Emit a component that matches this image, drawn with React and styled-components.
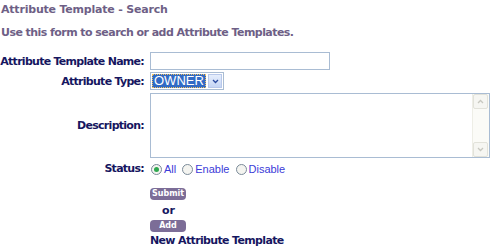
import React from "react";
import styled, { createGlobalStyle } from "styled-components";

const Global = createGlobalStyle`
  html, body { margin: 0; padding: 0; background: #ffffff; }
  body { font-family: "DejaVu Sans", Verdana, sans-serif; }
`;

const Page = styled.div`
  width: 493px;
  height: 247px;
  overflow: hidden;
  position: relative;
`;

const Title = styled.div`
  font-size: 11px;
  font-weight: bold;
  color: #6e5f86;
  padding: 3px 0 0 1px;
  height: 15px;
  line-height: 13px;
  letter-spacing: -0.2px;
  white-space: nowrap;
`;

const Intro = styled.div`
  font-size: 11px;
  font-weight: bold;
  color: #6e5f86;
  padding: 8px 0 0 1px;
  line-height: 13px;
  letter-spacing: -0.55px;
  white-space: nowrap;
`;

const Form = styled.div`
  display: grid;
  grid-template-columns: 150px 1fr;
  margin-top: 13px;
  row-gap: 2px;
`;

const Label = styled.div`
  font-size: 11px;
  font-weight: bold;
  color: #161660;
  padding-right: 6px;
  display: flex;
  align-items: center;
  justify-content: flex-end;
  letter-spacing: -0.72px;
  white-space: nowrap;
`;

const Field = styled.div`
  display: flex;
  align-items: center;
`;

const TextInput = styled.div`
  width: 178px;
  height: 16px;
  border: 1px solid #a9bcd3;
  background: #fff;
`;

const Select = styled.div`
  width: 70px;
  height: 14px;
  border: 1px solid #a9bcd3;
  display: flex;
  align-items: center;
  padding: 1px;
  box-sizing: content-box;
  margin-bottom: 1px;
`;

const SelectValue = styled.div`
  flex: 1;
  height: 14px;
  background: #316ac5;
  color: #fff;
  font-family: "Liberation Sans", Arial, sans-serif;
  font-size: 13px;
  line-height: 14px;
  padding-left: 2px;
  outline: 1px dotted #f0c060;
  outline-offset: -1px;
`;

const SelectArrow = styled.div`
  width: 14px;
  height: 14px;
  margin-left: 2px;
  background: linear-gradient(#e6eefc, #c5d5f5);
  border: 1px solid #b8c8ea;
  box-sizing: border-box;
  display: flex;
  align-items: center;
  justify-content: center;
`;

const TextArea = styled.div`
  width: 338px;
  height: 63px;
  border: 1px solid #a9bcd3;
  background: #fff;
  display: flex;
  justify-content: flex-end;
`;

const ScrollBar = styled.div`
  width: 16px;
  background: #fbfbf7;
  border-left: 1px solid #eeeee6;
  display: flex;
  flex-direction: column;
  justify-content: space-between;
`;

const ScrollBtn = styled.div`
  width: 15px;
  height: 15px;
  background: #f6f6f2;
  border: 1px solid #e2e2da;
  box-sizing: border-box;
  border-radius: 2px;
  display: flex;
  align-items: center;
  justify-content: center;
`;

const Radios = styled.div`
  display: flex;
  align-items: center;
  height: 16px;
  margin-top: 1px;
  font-family: "Liberation Sans", Arial, sans-serif;
  font-size: 11px;
  color: #3b3bd8;
`;

const RadioItem = styled.label`
  display: flex;
  align-items: center;
  margin-right: 5px;
`;

const Circle = styled.span`
  width: 9px;
  height: 9px;
  border: 1px solid #7a8a99;
  border-radius: 50%;
  background: #f4f4f0;
  margin: 0 2px 0 1px;
  display: flex;
  align-items: center;
  justify-content: center;
`;

const Dot = styled.span`
  width: 5px;
  height: 5px;
  border-radius: 50%;
  background: #2fa84f;
`;

const Actions = styled.div`
  grid-column: 2;
  display: flex;
  flex-direction: column;
  align-items: flex-start;
  padding-top: 9px;
`;

const Button = styled.div`
  width: ${(p) => p.w}px;
  height: 12px;
  border-radius: 4px;
  background: #7c6d97;
  color: #fff;
  font-size: 8px;
  font-weight: bold;
  line-height: 12px;
  text-align: center;
`;

const Or = styled.div`
  font-size: 11px;
  font-weight: bold;
  color: #161660;
  padding-left: 12px;
  line-height: 12px;
  margin: 5px 0 3px;
`;

const NewLink = styled.div`
  font-size: 11px;
  font-weight: bold;
  color: #161660;
  line-height: 13px;
  margin-top: 2px;
  letter-spacing: -0.65px;
  white-space: nowrap;
`;

function Chevron({ up, color = "#2a4aa0" }) {
  return (
    <svg width="7" height="5" viewBox="0 0 7 5">
      <path d={up ? "M1 4 L3.5 1.5 L6 4" : "M1 1 L3.5 3.5 L6 1"} fill="none" stroke={color} strokeWidth="1.3" />
    </svg>
  );
}

export default function App() {
  return (
    <Page>
      <Global />
      <Title>Attribute Template - Search</Title>
      <Intro>Use this form to search or add Attribute Templates.</Intro>
      <Form>
        <Label>Attribute Template Name:</Label>
        <Field><TextInput /></Field>

        <Label>Attribute Type:</Label>
        <Field>
          <Select>
            <SelectValue>OWNER</SelectValue>
            <SelectArrow><Chevron /></SelectArrow>
          </Select>
        </Field>

        <Label>Description:</Label>
        <Field>
          <TextArea>
            <ScrollBar>
              <ScrollBtn><Chevron up color="#c8c8c0" /></ScrollBtn>
              <ScrollBtn><Chevron color="#c8c8c0" /></ScrollBtn>
            </ScrollBar>
          </TextArea>
        </Field>

        <Label>Status:</Label>
        <Field>
          <Radios>
            <RadioItem><Circle><Dot /></Circle>All</RadioItem>
            <RadioItem><Circle />Enable</RadioItem>
            <RadioItem><Circle />Disable</RadioItem>
          </Radios>
        </Field>

        <Actions>
          <Button w={36}>Submit</Button>
          <Or>or</Or>
          <Button w={36}>Add</Button>
          <NewLink>New Attribute Template</NewLink>
        </Actions>
      </Form>
    </Page>
  );
}
